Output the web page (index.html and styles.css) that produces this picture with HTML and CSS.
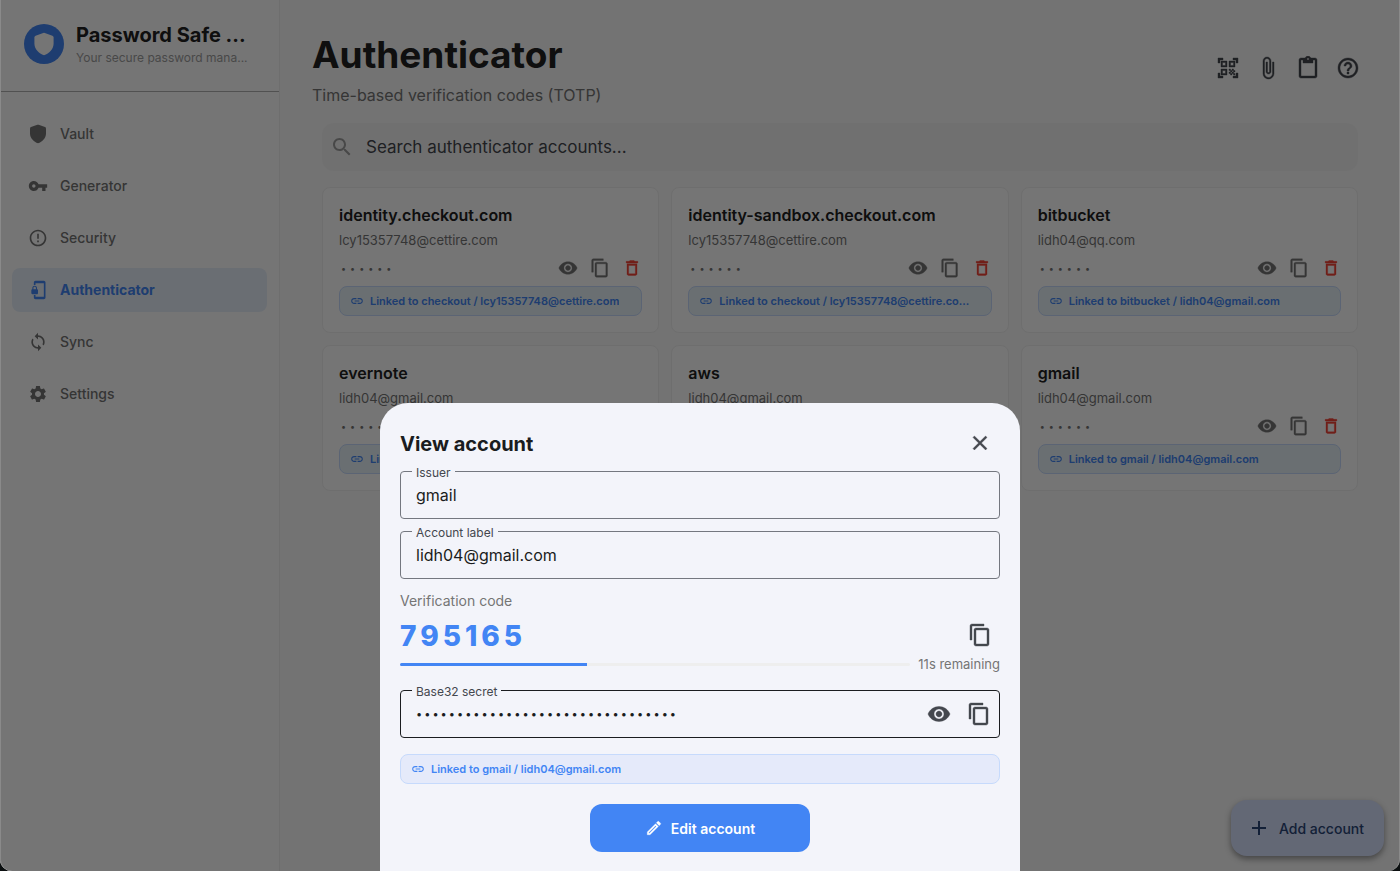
FILE: index.html
```html
<!DOCTYPE html>
<html lang="en">
<head>
<title>Password Safe Manager</title>
<meta charset="UTF-8">
<meta name="viewport" content="width=device-width, initial-scale=1">
<link rel="stylesheet" href="styles.css">
</head>
<body>

<!-- Icons -->
<svg class="sprite" aria-hidden="true">
  <symbol id="i-shield" viewBox="0 0 24 24"><path d="M11.2.9 3.6 3.7c-.8.3-1.2.9-1.2 1.7v6.1c0 5.4 4.4 10.1 9.6 11.7 5.2-1.6 9.6-6.3 9.6-11.7V5.4c0-.8-.4-1.4-1.2-1.7L12.8.9a2.4 2.4 0 0 0-1.6 0z"/></symbol>
  <symbol id="i-key" viewBox="0 0 24 24"><path d="M12.65 10C11.83 7.67 9.61 6 7 6c-3.31 0-6 2.69-6 6s2.69 6 6 6c2.61 0 4.83-1.67 5.65-4H17v4h4v-4h2v-4H12.65zM7 14c-1.1 0-2-.9-2-2s.9-2 2-2 2 .9 2 2-.9 2-2 2z"/></symbol>
  <symbol id="i-alert" viewBox="0 0 24 24"><path d="M11 15h2v2h-2zm0-8h2v6h-2zm1-5C6.47 2 2 6.5 2 12s4.47 10 10 10 10-4.48 10-10S17.52 2 12 2zm0 18c-4.42 0-8-3.58-8-8s3.58-8 8-8 8 3.58 8 8-3.58 8-8 8z"/></symbol>
  <symbol id="i-phonelock" viewBox="0 0 24 24"><path d="M19 1H9c-1.1 0-2 .9-2 2v3h2V4h10v16H9v-2H7v3c0 1.1.9 2 2 2h10c1.1 0 2-.9 2-2V3c0-1.1-.9-2-2-2zm-8.2 10V9.5C10.8 8.1 9.4 7 8 7S5.2 8.1 5.2 9.5V11c-.6 0-1.2.6-1.2 1.2v3.5c0 .7.6 1.3 1.2 1.3h5.5c.7 0 1.3-.6 1.3-1.2v-3.5c0-.7-.6-1.3-1.2-1.3zm-1.3 0h-3V9.5c0-.8.7-1.3 1.5-1.3s1.5.5 1.5 1.3V11z"/></symbol>
  <symbol id="i-sync" viewBox="0 0 24 24"><path d="M12 4V1L8 5l4 4V6c3.31 0 6 2.69 6 6 0 1.01-.25 1.97-.7 2.8l1.46 1.46C19.54 15.03 20 13.57 20 12c0-4.42-3.58-8-8-8zm0 14c-3.31 0-6-2.69-6-6 0-1.01.25-1.97.7-2.8L5.24 7.74C4.46 8.97 4 10.43 4 12c0 4.42 3.58 8 8 8v3l4-4-4-4v3z"/></symbol>
  <symbol id="i-gear" viewBox="0 0 24 24"><path d="M19.14 12.94c.04-.3.06-.61.06-.94 0-.32-.02-.64-.07-.94l2.03-1.58c.18-.14.23-.41.12-.61l-1.92-3.32c-.12-.22-.37-.29-.59-.22l-2.39.96c-.5-.38-1.03-.7-1.62-.94l-.36-2.54c-.04-.24-.24-.41-.48-.41h-3.84c-.24 0-.43.17-.47.41l-.36 2.54c-.59.24-1.13.57-1.62.94l-2.39-.96c-.22-.08-.47 0-.59.22L2.74 8.87c-.12.21-.08.47.12.61l2.03 1.58c-.05.3-.09.63-.09.94s.02.64.07.94l-2.03 1.58c-.18.14-.23.41-.12.61l1.92 3.32c.12.22.37.29.59.22l2.39-.96c.5.38 1.03.7 1.62.94l.36 2.54c.05.24.24.41.48.41h3.84c.24 0 .44-.17.47-.41l.36-2.54c.59-.24 1.13-.56 1.62-.94l2.39.96c.22.08.47 0 .59-.22l1.92-3.32c.12-.22.07-.47-.12-.61l-2.01-1.58zM12 15.6c-1.98 0-3.6-1.62-3.6-3.6s1.62-3.6 3.6-3.6 3.6 1.62 3.6 3.6-1.62 3.6-3.6 3.6z"/></symbol>
  <symbol id="i-search" viewBox="0 0 24 24"><path d="M15.5 14h-.79l-.28-.27C15.41 12.59 16 11.11 16 9.5 16 5.91 13.09 3 9.5 3S3 5.91 3 9.5 5.91 16 9.5 16c1.61 0 3.09-.59 4.23-1.57l.27.28v.79l5 4.99L20.49 19l-4.99-5zm-6 0C7.01 14 5 11.99 5 9.5S7.01 5 9.5 5 14 7.01 14 9.5 11.99 14 9.5 14z"/></symbol>
  <symbol id="i-qr" viewBox="0 0 24 24"><path d="M9.5 6.5v3h-3v-3h3M11 5H5v6h6V5zm-1.5 9.5v3h-3v-3h3M11 13H5v6h6v-6zm6.5-6.5v3h-3v-3h3M19 5h-6v6h6V5zm-6 8h1.5v1.5H13V13zm1.5 1.5H16V16h-1.5v-1.5zM16 13h1.5v1.5H16V13zm-3 3h1.5v1.5H13V16zm1.5 1.5H16V19h-1.5v-1.5zM16 16h1.5v1.5H16V16zm1.5-1.5H19V16h-1.5v-1.5zm0 3H19V19h-1.5v-1.5zM22 7h-2V4h-3V2h5v5zm0 15v-5h-2v3h-3v2h5zM2 22h5v-2H4v-3H2v5zM2 2v5h2V4h3V2H2z"/></symbol>
  <symbol id="i-clip" viewBox="0 0 24 24"><path d="M16.5 6v11.5c0 2.21-1.79 4-4 4s-4-1.79-4-4V5c0-1.38 1.12-2.5 2.5-2.5s2.5 1.12 2.5 2.5v10.5c0 .55-.45 1-1 1s-1-.45-1-1V6H10v9.5c0 1.38 1.12 2.5 2.5 2.5s2.5-1.12 2.5-2.5V5c0-2.21-1.79-4-4-4S7 2.79 7 5v12.5c0 3.04 2.46 5.5 5.5 5.5s5.5-2.46 5.5-5.5V6h-1.5z"/></symbol>
  <symbol id="i-paste" viewBox="0 0 24 24"><path d="M19 2h-4.18C14.4.84 13.3 0 12 0c-1.3 0-2.4.84-2.82 2H5c-1.1 0-2 .9-2 2v16c0 1.1.9 2 2 2h14c1.1 0 2-.9 2-2V4c0-1.1-.9-2-2-2zm-7 0c.55 0 1 .45 1 1s-.45 1-1 1-1-.45-1-1 .45-1 1-1zm7 18H5V4h2v3h10V4h2v16z"/></symbol>
  <symbol id="i-help" viewBox="0 0 24 24"><path d="M11 18h2v-2h-2v2zm1-16C6.48 2 2 6.48 2 12s4.48 10 10 10 10-4.48 10-10S17.52 2 12 2zm0 18c-4.41 0-8-3.59-8-8s3.59-8 8-8 8 3.59 8 8-3.59 8-8 8zm0-14c-2.21 0-4 1.79-4 4h2c0-1.1.9-2 2-2s2 .9 2 2c0 2-3 1.75-3 5h2c0-2.25 3-2.5 3-5 0-2.21-1.79-4-4-4z"/></symbol>
  <symbol id="i-eye" viewBox="0 0 24 24"><path d="M12 4.5C7 4.5 2.73 7.61 1 12c1.73 4.39 6 7.5 11 7.5s9.27-3.11 11-7.5c-1.73-4.39-6-7.5-11-7.5zM12 17c-2.76 0-5-2.24-5-5s2.24-5 5-5 5 2.24 5 5-2.24 5-5 5zm0-8c-1.66 0-3 1.34-3 3s1.34 3 3 3 3-1.34 3-3-1.34-3-3-3z"/></symbol>
  <symbol id="i-copy" viewBox="0 0 24 24"><path d="M16 1H4c-1.1 0-2 .9-2 2v14h2V3h12V1zm3 4H8c-1.1 0-2 .9-2 2v14c0 1.1.9 2 2 2h11c1.1 0 2-.9 2-2V7c0-1.1-.9-2-2-2zm0 16H8V7h11v14z"/></symbol>
  <symbol id="i-trash" viewBox="0 0 24 24"><path d="M6 19c0 1.1.9 2 2 2h8c1.1 0 2-.9 2-2V7H6v12zM8 9h8v10H8V9zm7.5-5-1-1h-5l-1 1H5v2h14V4h-3.5z"/></symbol>
  <symbol id="i-link" viewBox="0 0 24 24"><path d="M3.9 12c0-1.71 1.39-3.1 3.1-3.1h4V7H7c-2.76 0-5 2.24-5 5s2.24 5 5 5h4v-1.9H7c-1.71 0-3.1-1.39-3.1-3.1zM8 13h8v-2H8v2zm9-6h-4v1.9h4c1.71 0 3.1 1.39 3.1 3.1s-1.39 3.1-3.1 3.1h-4V17h4c2.76 0 5-2.24 5-5s-2.24-5-5-5z"/></symbol>
  <symbol id="i-edit" viewBox="0 0 24 24"><path d="M14.06 9.02l.92.92L5.92 19H5v-.92l9.06-9.06M17.66 3c-.25 0-.51.1-.7.29l-1.83 1.83 3.75 3.75 1.83-1.83c.39-.39.39-1.02 0-1.41l-2.34-2.34c-.2-.2-.45-.29-.71-.29zm-3.6 3.19L3 17.25V21h3.75L17.81 9.94l-3.75-3.75z"/></symbol>
  <symbol id="i-plus" viewBox="0 0 24 24"><path d="M19 13h-6v6h-2v-6H5v-2h6V5h2v6h6v2z"/></symbol>
  <symbol id="i-close" viewBox="0 0 24 24"><path d="M19 6.41L17.59 5 12 10.59 6.41 5 5 6.41 10.59 12 5 17.59 6.41 19 12 13.41 17.59 19 19 17.59 13.41 12z"/></symbol>
</svg>

<div class="app">

  <!-- Sidebar -->
  <div class="sidebar">
    <div class="brand">
      <div class="logo"><svg class="icon icon-lg"><use href="#i-shield"/></svg></div>
      <div class="brand-text">
        <div class="brand-name">Password Safe ...</div>
        <div class="brand-sub">Your secure password mana...</div>
      </div>
    </div>
    <nav class="nav">
      <a href="#vault"><svg class="icon"><use href="#i-shield"/></svg>Vault</a>
      <a href="#generator"><svg class="icon"><use href="#i-key"/></svg>Generator</a>
      <a href="#security"><svg class="icon"><use href="#i-alert"/></svg>Security</a>
      <a href="#authenticator" class="active"><svg class="icon"><use href="#i-phonelock"/></svg>Authenticator</a>
      <a href="#sync"><svg class="icon"><use href="#i-sync"/></svg>Sync</a>
      <a href="#settings"><svg class="icon"><use href="#i-gear"/></svg>Settings</a>
    </nav>
  </div>

  <!-- Main -->
  <div class="main">
    <div class="page-head">
      <div>
        <h1>Authenticator</h1>
        <p class="subtitle">Time-based verification codes (TOTP)</p>
      </div>
      <div class="tools">
        <button class="icon-btn" aria-label="Scan QR code"><svg class="icon icon-lg"><use href="#i-qr"/></svg></button>
        <button class="icon-btn" aria-label="Attach file"><svg class="icon icon-lg"><use href="#i-clip"/></svg></button>
        <button class="icon-btn" aria-label="Paste"><svg class="icon icon-lg"><use href="#i-paste"/></svg></button>
        <button class="icon-btn" aria-label="Help"><svg class="icon icon-lg"><use href="#i-help"/></svg></button>
      </div>
    </div>

    <div class="content">
      <div class="search">
        <svg class="icon icon-lg"><use href="#i-search"/></svg>
        <input type="text" aria-label="Search" placeholder="Search authenticator accounts...">
      </div>

      <div class="cards">
        <div class="card">
          <h2>identity.checkout.com</h2>
          <p class="email">lcy15357748@cettire.com</p>
          <div class="code-row">
            <span class="dots">••••••</span>
            <button class="mini-btn" aria-label="Show"><svg class="icon"><use href="#i-eye"/></svg></button>
            <button class="mini-btn" aria-label="Copy"><svg class="icon"><use href="#i-copy"/></svg></button>
            <button class="mini-btn danger" aria-label="Delete"><svg class="icon"><use href="#i-trash"/></svg></button>
          </div>
          <div class="linked"><svg class="icon icon-sm"><use href="#i-link"/></svg><span>Linked to checkout / lcy15357748@cettire.com</span></div>
        </div>
        <div class="card">
          <h2>identity-sandbox.checkout.com</h2>
          <p class="email">lcy15357748@cettire.com</p>
          <div class="code-row">
            <span class="dots">••••••</span>
            <button class="mini-btn" aria-label="Show"><svg class="icon"><use href="#i-eye"/></svg></button>
            <button class="mini-btn" aria-label="Copy"><svg class="icon"><use href="#i-copy"/></svg></button>
            <button class="mini-btn danger" aria-label="Delete"><svg class="icon"><use href="#i-trash"/></svg></button>
          </div>
          <div class="linked"><svg class="icon icon-sm"><use href="#i-link"/></svg><span>Linked to checkout / lcy15357748@cettire.co...</span></div>
        </div>
        <div class="card">
          <h2>bitbucket</h2>
          <p class="email">lidh04@qq.com</p>
          <div class="code-row">
            <span class="dots">••••••</span>
            <button class="mini-btn" aria-label="Show"><svg class="icon"><use href="#i-eye"/></svg></button>
            <button class="mini-btn" aria-label="Copy"><svg class="icon"><use href="#i-copy"/></svg></button>
            <button class="mini-btn danger" aria-label="Delete"><svg class="icon"><use href="#i-trash"/></svg></button>
          </div>
          <div class="linked"><svg class="icon icon-sm"><use href="#i-link"/></svg><span>Linked to bitbucket / lidh04@gmail.com</span></div>
        </div>
        <div class="card">
          <h2>evernote</h2>
          <p class="email">lidh04@gmail.com</p>
          <div class="code-row">
            <span class="dots">••••••</span>
            <button class="mini-btn" aria-label="Show"><svg class="icon"><use href="#i-eye"/></svg></button>
            <button class="mini-btn" aria-label="Copy"><svg class="icon"><use href="#i-copy"/></svg></button>
            <button class="mini-btn danger" aria-label="Delete"><svg class="icon"><use href="#i-trash"/></svg></button>
          </div>
          <div class="linked"><svg class="icon icon-sm"><use href="#i-link"/></svg><span>Linked to evernote / lidh04@gmail.com</span></div>
        </div>
        <div class="card">
          <h2>aws</h2>
          <p class="email">lidh04@gmail.com</p>
          <div class="code-row">
            <span class="dots">••••••</span>
            <button class="mini-btn" aria-label="Show"><svg class="icon"><use href="#i-eye"/></svg></button>
            <button class="mini-btn" aria-label="Copy"><svg class="icon"><use href="#i-copy"/></svg></button>
            <button class="mini-btn danger" aria-label="Delete"><svg class="icon"><use href="#i-trash"/></svg></button>
          </div>
          <div class="linked"><svg class="icon icon-sm"><use href="#i-link"/></svg><span>Linked to aws / lidh04@gmail.com</span></div>
        </div>
        <div class="card">
          <h2>gmail</h2>
          <p class="email">lidh04@gmail.com</p>
          <div class="code-row">
            <span class="dots">••••••</span>
            <button class="mini-btn" aria-label="Show"><svg class="icon"><use href="#i-eye"/></svg></button>
            <button class="mini-btn" aria-label="Copy"><svg class="icon"><use href="#i-copy"/></svg></button>
            <button class="mini-btn danger" aria-label="Delete"><svg class="icon"><use href="#i-trash"/></svg></button>
          </div>
          <div class="linked"><svg class="icon icon-sm"><use href="#i-link"/></svg><span>Linked to gmail / lidh04@gmail.com</span></div>
        </div>
      </div>
    </div>
  </div>

  <button class="fab"><svg class="icon icon-lg"><use href="#i-plus"/></svg>Add account</button>

  <div class="scrim"></div>

  <!-- Bottom sheet -->
  <div class="sheet" role="dialog" aria-labelledby="sheet-title">
    <div class="sheet-head">
      <h2 id="sheet-title">View account</h2>
      <button class="icon-btn" aria-label="Close"><svg class="icon icon-lg"><use href="#i-close"/></svg></button>
    </div>
    <div class="field">
      <label for="issuer">Issuer</label>
      <input type="text" id="issuer" value="gmail" readonly>
    </div>
    <div class="field">
      <label for="account">Account label</label>
      <input type="text" id="account" value="lidh04@gmail.com" readonly>
    </div>
    <div class="code-label">Verification code</div>
    <div class="totp">
      <span class="totp-code">795165</span>
      <button class="icon-btn" aria-label="Copy code"><svg class="icon icon-lg"><use href="#i-copy"/></svg></button>
    </div>
    <div class="timer">
      <div class="bar"><div class="bar-fill" style="width: 36.7%"></div></div>
      <span>11s remaining</span>
    </div>
    <div class="field secret">
      <label for="secret">Base32 secret</label>
      <input type="text" id="secret" value="••••••••••••••••••••••••••••••••" readonly>
      <button class="icon-btn" aria-label="Show secret"><svg class="icon icon-lg"><use href="#i-eye"/></svg></button>
      <button class="icon-btn" aria-label="Copy secret"><svg class="icon icon-lg"><use href="#i-copy"/></svg></button>
    </div>
    <div class="linked"><svg class="icon icon-sm"><use href="#i-link"/></svg><span>Linked to gmail / lidh04@gmail.com</span></div>
    <button class="edit-btn"><svg class="icon icon-md"><use href="#i-edit"/></svg>Edit account</button>
  </div>

</div>
</body>
</html>
```
FILE: styles.css
```css
* {
  box-sizing: border-box;
}

body {
  margin: 0;
  background: #0b0f10;
  font-family: Inter, "Liberation Sans", sans-serif;
  font-size: 14px;
  color: #212121;
}

h1, h2, p {
  margin: 0;
}

button, input {
  font-family: inherit;
  border: 0;
  padding: 0;
  background: none;
}

.sprite {
  display: none;
}

.icon {
  width: 20px;
  height: 20px;
  fill: currentColor;
  flex: none;
}
.icon-sm {
  width: 14px;
  height: 14px;
}
.icon-md {
  width: 18px;
  height: 18px;
}
.icon-lg {
  width: 24px;
  height: 24px;
}
.icon-btn .icon,
.mini-btn .icon,
.edit-btn .icon {
  stroke: currentColor;
  stroke-width: .4;
}

.app {
  position: relative;
  display: flex;
  height: 100vh;
  overflow: hidden;
  background: #fafafa;
  border-radius: 0 0 12px 12px;
}

/* thin window edge, stays above the scrim */
.app::after {
  content: "";
  position: absolute;
  inset: 0;
  border: 1px solid #8a8a8a;
  border-width: 0 1px;
  border-radius: 0 0 12px 12px;
  pointer-events: none;
}

/* Sidebar */
.sidebar {
  width: 280px;
  flex: none;
  background: #fff;
  border-right: 1px solid #f0f0f0;
}

.brand {
  display: flex;
  align-items: center;
  gap: 12px;
  height: 92px;
  padding: 0 24px 4px;
  border-bottom: 1px solid #b0b0b0;
}

.logo {
  display: flex;
  align-items: center;
  justify-content: center;
  width: 40px;
  height: 40px;
  flex: none;
  border-radius: 50%;
  background: #4285f4;
  color: #fff;
}

.brand-text {
  min-width: 0;
  padding-top: 2px;
}
.brand-name,
.brand-sub {
  overflow: hidden;
  white-space: nowrap;
  text-overflow: ellipsis;
}
.brand-name {
  font-size: 20px;
  font-weight: 700;
  line-height: 26px;
}
.brand-sub {
  font-size: 12px;
  line-height: 20px;
  color: #9e9e9e;
}

.nav {
  display: flex;
  flex-direction: column;
  gap: 8px;
  padding: 20px 12px;
}
.nav a {
  display: flex;
  align-items: center;
  gap: 12px;
  height: 44px;
  padding: 0 16px 1px;
  border-radius: 8px;
  color: #757575;
  font-weight: 500;
  text-decoration: none;
}
.nav a.active {
  background: #e8f0fa;
  color: #4285f4;
  font-weight: 700;
}

/* Main column */
.main {
  flex: 1;
  min-width: 0;
}

.page-head {
  display: flex;
  justify-content: space-between;
  padding: 32px 32px 15px;
}
h1 {
  font-size: 37px;
  line-height: 46px;
}
.subtitle {
  margin-top: 4px;
  font-size: 16px;
  line-height: 26px;
  color: #757575;
}

.tools {
  display: flex;
  padding-top: 16px;
}
.icon-btn {
  display: flex;
  align-items: center;
  justify-content: center;
  width: 40px;
  height: 40px;
  flex: none;
  color: #44474e;
}

.content {
  padding: 0 42px;
}

.search {
  display: flex;
  align-items: center;
  gap: 12px;
  height: 48px;
  padding: 0 8px;
  border-radius: 12px;
  background: #f5f5f5;
  color: #9e9e9e;
}
.search input {
  flex: 1;
  font-size: 17px;
}
.search input::placeholder {
  color: #44474e;
}

.cards {
  display: grid;
  grid-template-columns: repeat(3, minmax(0, 1fr));
  gap: 12px;
  margin-top: 16px;
}
.card {
  padding: 16px;
  border: 1px solid #f0f0f0;
  border-radius: 8px;
  background: #fff;
}
.card h2 {
  font-size: 16px;
  font-weight: 600;
  line-height: 22px;
}
.email {
  margin-top: 4px;
  font-size: 13px;
  line-height: 20px;
  color: #757575;
}

.code-row {
  display: flex;
  align-items: center;
  margin: 2px -6px 2px 0;
}
.dots {
  flex: 1;
  padding-left: 2px;
  font-size: 9px;
  letter-spacing: 4px;
  color: #757575;
}
.mini-btn {
  display: flex;
  align-items: center;
  justify-content: center;
  width: 32px;
  height: 32px;
  color: #757575;
}
.danger {
  color: #f44336;
}

.linked {
  display: flex;
  align-items: center;
  gap: 6px;
  height: 30px;
  padding: 0 10px;
  border: 1px solid #c6dafc;
  border-radius: 8px;
  background: #e6f2f8;
  color: #4285f4;
  font-size: 11px;
  font-weight: 600;
}
.linked span {
  overflow: hidden;
  white-space: nowrap;
  text-overflow: ellipsis;
}

.fab {
  position: absolute;
  right: 16px;
  bottom: 15px;
  display: flex;
  align-items: center;
  gap: 8px;
  height: 56px;
  padding: 0 20px 0 16px;
  border-radius: 16px;
  background: #d8e2ff;
  color: #2b4678;
  font-size: 14px;
  font-weight: 500;
  box-shadow: 0 3px 6px rgba(0, 0, 0, .4);
}

.scrim {
  position: absolute;
  inset: 0;
  background: rgba(0, 0, 0, .54);
}

/* Bottom sheet */
.sheet {
  position: absolute;
  left: 0;
  right: 0;
  bottom: 0;
  width: 100%;
  max-width: 640px;
  margin: 0 auto;
  padding: 20px 20px 19px;
  border-radius: 28px 28px 0 0;
  background: #f3f4fa;
}

.sheet-head {
  display: flex;
  align-items: center;
  justify-content: space-between;
  margin-bottom: 8px;
}
.sheet-head h2 {
  padding-top: 2px;
  font-size: 20px;
  color: #1a1c20;
}

.field {
  position: relative;
  display: flex;
  align-items: center;
  height: 48px;
  margin-bottom: 12px;
  border: 1px solid #74777f;
  border-radius: 4px;
}
.field label {
  position: absolute;
  top: -8px;
  left: 11px;
  padding: 0 4px;
  background: #f3f4fa;
  font-size: 12px;
  line-height: 18px;
  color: #44474e;
}
.field input {
  flex: 1;
  min-width: 0;
  height: 100%;
  padding: 0 15px;
  font-size: 16px;
  color: #1a1c20;
}

.code-label {
  line-height: 20px;
  color: #757575;
}
.totp {
  display: flex;
  align-items: center;
  justify-content: space-between;
  margin-top: 4px;
}
.totp-code {
  padding-top: 2px;
  font-size: 28px;
  font-weight: 800;
  letter-spacing: 4px;
  color: #4285f4;
}

.timer {
  display: flex;
  align-items: center;
  gap: 8px;
  margin-bottom: 17px;
  font-size: 13px;
  line-height: 18px;
  color: #757575;
}
.bar {
  flex: 1;
  height: 3px;
  border-radius: 2px;
  background: #eee;
  overflow: hidden;
}
.bar-fill {
  height: 100%;
  background: #4285f4;
}

.secret {
  margin-bottom: 16px;
  border-color: #1a1c20;
}
.secret input {
  font-size: 11px;
  letter-spacing: 2px;
}

.sheet .linked {
  background: #e5eafa;
}

.edit-btn {
  display: flex;
  align-items: center;
  justify-content: center;
  gap: 8px;
  width: 220px;
  height: 48px;
  margin: 20px auto 0;
  border-radius: 12px;
  background: #4285f4;
  color: #fff;
  font-size: 14px;
  font-weight: 600;
}
```
